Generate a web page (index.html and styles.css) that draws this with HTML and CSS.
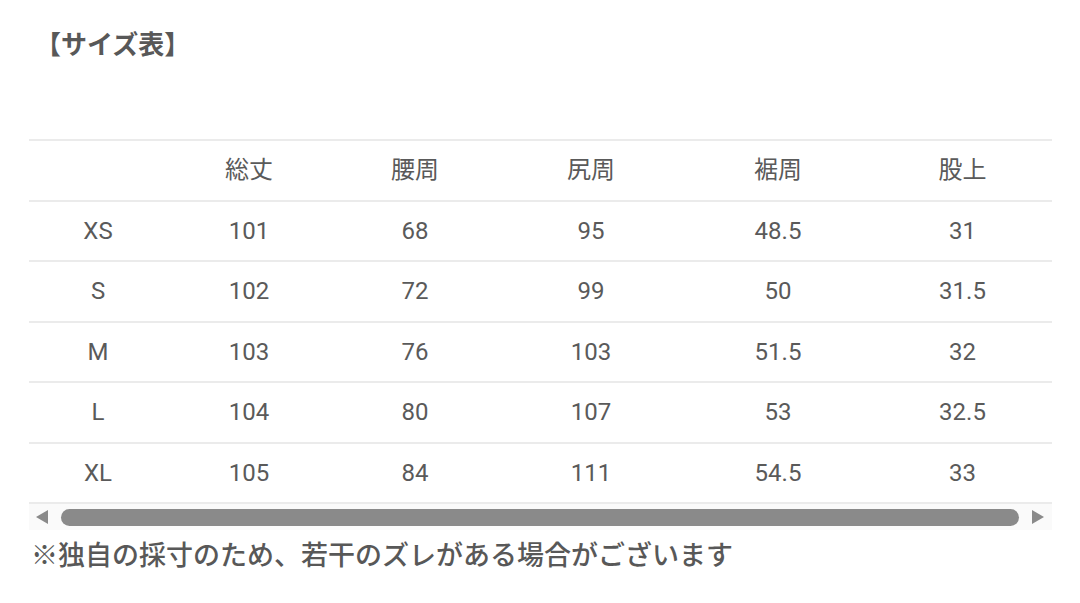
FILE: index.html
```html
<!DOCTYPE html>
<html lang="ja">
<head>
<meta charset="utf-8">
<link rel="stylesheet" href="styles.css">
</head>
<body>
<div class="page">
  <h2 class="title">【サイズ表】</h2>
  <div class="table-wrap">
    <table class="size-table">
      <colgroup>
        <col class="c0"><col class="c1"><col class="c2"><col class="c3"><col class="c4"><col class="c5">
      </colgroup>
      <thead>
        <tr><th></th><th>総丈</th><th>腰周</th><th>尻周</th><th>裾周</th><th>股上</th></tr>
      </thead>
      <tbody>
        <tr><td>XS</td><td>101</td><td>68</td><td>95</td><td>48.5</td><td>31</td></tr>
        <tr><td>S</td><td>102</td><td>72</td><td>99</td><td>50</td><td>31.5</td></tr>
        <tr><td>M</td><td>103</td><td>76</td><td>103</td><td>51.5</td><td>32</td></tr>
        <tr><td>L</td><td>104</td><td>80</td><td>107</td><td>53</td><td>32.5</td></tr>
        <tr><td>XL</td><td>105</td><td>84</td><td>111</td><td>54.5</td><td>33</td></tr>
      </tbody>
    </table>
    <div class="scrollbar">
      <span class="arrow arrow-left"></span>
      <span class="thumb"></span>
      <span class="arrow arrow-right"></span>
    </div>
  </div>
  <p class="note">※独自の採寸のため、若干のズレがある場合がございます</p>
</div>
</body>
</html>
```
FILE: styles.css
```css
html, body {
  margin: 0;
  padding: 0;
  background: #ffffff;
}

.page {
  padding: 24px 28px 0 29px;
  font-family: "Roboto", "Noto Sans CJK JP", sans-serif;
  color: #555555;
}

.title {
  margin: 0 0 77px 0;
  font-size: 26px;
  line-height: 38px;
  font-weight: 700;
  color: #585858;
  font-family: "Noto Sans CJK JP", sans-serif;
  padding-left: 6px;
}

.table-wrap {
  width: 1023px;
}

.size-table {
  width: 1023px;
  border-collapse: collapse;
  table-layout: fixed;
  font-size: 24px;
}

.c0 { width: 138px; }
.c1 { width: 164px; }
.c2 { width: 168px; }
.c3 { width: 184px; }
.c4 { width: 190px; }
.c5 { width: 179px; }

.size-table th,
.size-table td {
  height: 58.5px;
  padding: 0;
  text-align: center;
  vertical-align: middle;
  font-weight: 400;
  border-top: 2px solid #ebebeb;
  border-bottom: 2px solid #ebebeb;
  color: #5a5a5a;
}

.size-table th {
  font-family: "Noto Sans CJK JP", sans-serif;
  font-size: 24px;
  height: 52.5px;
  padding-bottom: 6px;
}

.scrollbar {
  display: flex;
  align-items: center;
  height: 26px;
  background: #fafafa;
  padding: 0 8px 0 7px;
  gap: 13px;
}

.arrow {
  width: 0;
  height: 0;
  border-top: 7px solid transparent;
  border-bottom: 7px solid transparent;
}

.arrow-left {
  border-right: 12px solid #8a8a8a;
}

.arrow-right {
  border-left: 12px solid #8a8a8a;
}

.thumb {
  flex: 1;
  height: 17px;
  border-radius: 9px;
  background: #8a8a8a;
}

.note {
  margin: 5px 0 0 2px;
  font-family: "Noto Sans CJK JP", sans-serif;
  font-size: 27px;
  line-height: 38px;
  font-weight: 500;
  color: #585858;
}
```
